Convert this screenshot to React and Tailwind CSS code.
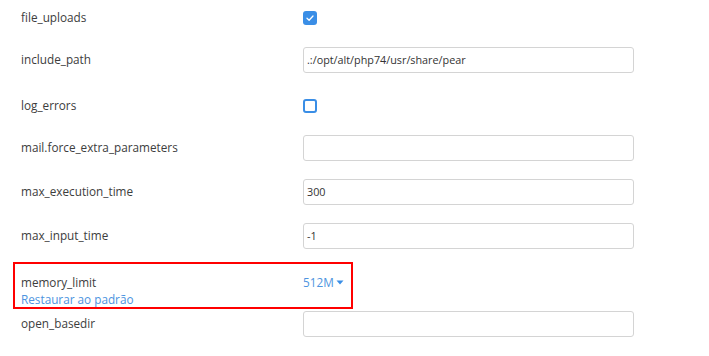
import { useState } from 'react'

const font = { fontFamily: '"Open Sans", "Noto Sans", sans-serif' }

function Checkbox({ checked }) {
    return checked ? (
        <span className="flex h-[14px] w-[14px] items-center justify-center rounded-[3px] bg-[#3a8ee6]">
            <svg width="10" height="10" viewBox="0 0 10 10" fill="none">
                <path d="M2 5.2 L4.1 7.2 L8 3" stroke="white" strokeWidth="1.3" strokeLinecap="round" strokeLinejoin="round" />
            </svg>
        </span>
    ) : (
        <span className="block h-[14px] w-[14px] rounded-[3px] border-2 border-[#3a8ee6] bg-white" />
    )
}

function TextInput({ value }) {
    return (
        <div className="flex h-[26px] w-[331px] items-center rounded-[3px] border border-[#d4d4d4] bg-white px-[3px] text-[10.8px] text-[#333]">
            {value}
        </div>
    )
}

const rows = [
    { name: 'file_uploads', type: 'check', checked: true },
    { name: 'include_path', type: 'text', value: '.:/opt/alt/php74/usr/share/pear' },
    { name: 'log_errors', type: 'check', checked: false },
    { name: 'mail.force_extra_parameters', type: 'text', value: '' },
    { name: 'max_execution_time', type: 'text', value: '300' },
    { name: 'max_input_time', type: 'text', value: '-1' },
]

export default function App() {
    const [memory] = useState('512M')

    return (
        <div className="min-h-[356px] w-[709px] bg-white pt-[3px] text-[11.75px] text-[#3d3d3d]" style={font}>
            <div className="flex flex-col gap-[18px]">
                {rows.map((row) => (
                    <div
                        key={row.name}
                        className={`flex h-[26px] items-center ${row.type === 'check' ? 'pt-[4px]' : ''}`}
                    >
                        <div className="w-[303px] pl-[21px]">{row.name}</div>
                        {row.type === 'check' ? <Checkbox checked={row.checked} /> : <TextInput value={row.value} />}
                    </div>
                ))}
            </div>

            <div className="ml-[13px] mt-[13px] flex h-[47px] w-[340px] items-start border-2 border-[#ff0000] pl-[6px] pt-[10px]">
                <div className="flex w-[282px] flex-col leading-[17px]">
                    <span>memory_limit</span>
                    <span className="text-[#4d94e0]">Restaurar ao padrão</span>
                </div>
                <div className="flex items-center leading-[17px] text-[#4d94e0]">
                    <span>{memory}</span>
                    <svg width="8" height="5" viewBox="0 0 8 5" className="ml-[2px]">
                        <path d="M0.5 0.5 L7.5 0.5 L4 4.5 Z" fill="#3a8ee6" />
                    </svg>
                </div>
            </div>

            <div className="mt-[2px] flex h-[26px] items-center">
                <div className="w-[303px] pl-[21px]">open_basedir</div>
                <TextInput value="" />
            </div>
        </div>
    )
}
